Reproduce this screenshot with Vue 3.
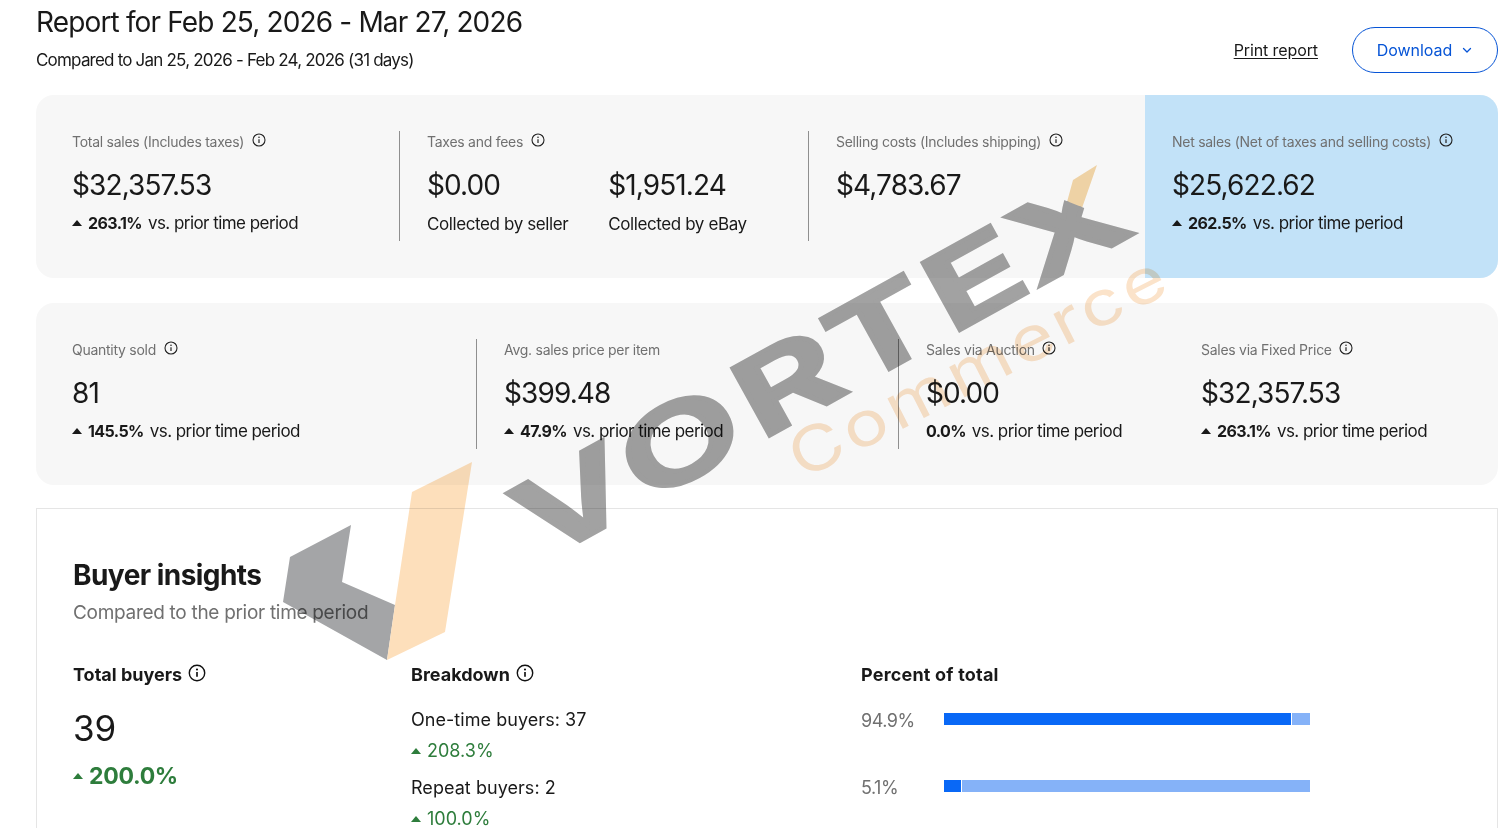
<script setup>
const row1 = [
  { label: 'Total sales (Includes taxes)', info: true, values: [{ v: '$32,357.53' }], pct: '263.1%', up: true },
  { label: 'Taxes and fees', info: true, values: [{ v: '$0.00', note: 'Collected by seller' }, { v: '$1,951.24', note: 'Collected by eBay' }] },
  { label: 'Selling costs (Includes shipping)', info: true, values: [{ v: '$4,783.67' }] },
  { label: 'Net sales (Net of taxes and selling costs)', info: true, values: [{ v: '$25,622.62' }], pct: '262.5%', up: true, net: true }
]
const row2 = [
  { label: 'Quantity sold', info: true, values: [{ v: '81' }], pct: '145.5%', up: true },
  { label: 'Avg. sales price per item', values: [{ v: '$399.48' }], pct: '47.9%', up: true },
  { label: 'Sales via Auction', info: true, values: [{ v: '$0.00' }], pct: '0.0%' },
  { label: 'Sales via Fixed Price', info: true, values: [{ v: '$32,357.53' }], pct: '263.1%', up: true }
]
const bars = [
  { label: '94.9%', dark: 347, y: 'first' },
  { label: '5.1%', dark: 17, y: 'second' }
]
</script>

<template>
  <div class="page">
    <header class="head">
      <div>
        <h1>Report for Feb 25, 2026 - Mar 27, 2026</h1>
        <p class="compare">Compared to Jan 25, 2026 - Feb 24, 2026 (31 days)</p>
      </div>
      <div class="actions">
        <a class="print">Print report</a>
        <button class="download">
          Download
          <svg width="12" height="12" viewBox="0 0 12 12" fill="none"><path d="M2.5 4.5 6 8l3.5-3.5" stroke="#0654d6" stroke-width="1.3" stroke-linecap="round" stroke-linejoin="round"/></svg>
        </button>
      </div>
    </header>

    <section class="card row1">
      <div v-for="c in row1" :key="c.label" class="cell" :class="{ net: c.net }">
        <div class="inner">
          <div class="label">{{ c.label }}
            <svg v-if="c.info" class="info" viewBox="0 0 14 14" fill="none"><circle cx="7" cy="7" r="6" stroke="#222" stroke-width="1.1"/><path d="M7 6.3v3.6" stroke="#222" stroke-width="1.2"/><circle cx="7" cy="4.3" r=".8" fill="#222"/></svg>
          </div>
          <div class="values">
            <div v-for="v in c.values" :key="v.v" class="valcol">
              <div class="value">{{ v.v }}</div>
              <div v-if="v.note" class="note">{{ v.note }}</div>
            </div>
          </div>
          <div v-if="c.pct" class="delta"><i v-if="c.up" class="tri"></i><b>{{ c.pct }}</b><span>vs. prior time period</span></div>
        </div>
      </div>
    </section>

    <section class="card row2">
      <div v-for="c in row2" :key="c.label" class="cell">
        <div class="inner">
          <div class="label">{{ c.label }}
            <svg v-if="c.info" class="info" viewBox="0 0 14 14" fill="none"><circle cx="7" cy="7" r="6" stroke="#222" stroke-width="1.1"/><path d="M7 6.3v3.6" stroke="#222" stroke-width="1.2"/><circle cx="7" cy="4.3" r=".8" fill="#222"/></svg>
          </div>
          <div class="values">
            <div v-for="v in c.values" :key="v.v" class="valcol"><div class="value">{{ v.v }}</div></div>
          </div>
          <div class="delta"><i v-if="c.up" class="tri"></i><b>{{ c.pct }}</b><span>vs. prior time period</span></div>
        </div>
      </div>
    </section>

    <section class="insights">
      <h2>Buyer insights</h2>
      <p class="sub">Compared to the prior time period</p>
      <div class="cols">
        <div class="col-a">
          <h3>Total buyers <svg class="info big" viewBox="0 0 14 14" fill="none"><circle cx="7" cy="7" r="6" stroke="#111" stroke-width="1.1"/><path d="M7 6.3v3.6" stroke="#111" stroke-width="1.3"/><circle cx="7" cy="4.3" r=".85" fill="#111"/></svg></h3>
          <div class="big-num">39</div>
          <div class="big-pct"><i class="tri green"></i>200.0%</div>
        </div>
        <div class="col-b">
          <h3>Breakdown <svg class="info big" viewBox="0 0 14 14" fill="none"><circle cx="7" cy="7" r="6" stroke="#111" stroke-width="1.1"/><path d="M7 6.3v3.6" stroke="#111" stroke-width="1.3"/><circle cx="7" cy="4.3" r=".85" fill="#111"/></svg></h3>
          <div class="bd first">One-time buyers: 37</div>
          <div class="bd-pct"><i class="tri green"></i>208.3%</div>
          <div class="bd">Repeat buyers: 2</div>
          <div class="bd-pct"><i class="tri green"></i>100.0%</div>
        </div>
        <div class="col-c">
          <h3>Percent of total</h3>
          <div v-for="b in bars" :key="b.label" class="bar-row" :class="b.y">
            <span class="pct">{{ b.label }}</span>
            <div class="bar">
              <div class="dark" :style="{ width: b.dark + 'px' }"></div>
              <div class="light"></div>
            </div>
          </div>
        </div>
      </div>
    </section>

    <svg class="watermark" width="1512" height="828" viewBox="0 0 1512 828">
      <defs>
        <clipPath id="wm-x-clip"><polygon points="360,-100 396,-100 444,-12 456,10 360,10"/></clipPath>
      </defs>
      <polygon points="290,557 351,525 342,582 395,605 387,660 283,602" fill="#a4a5a7"/>
      <polygon points="412,492 472,462 445,632 387,660 395,605" fill="#fddfbb"/>
      <polygon points="1097,165 1073,180 1067,202 1082,208" fill="#f6d9ab"/>
      <text class="wm-v" x="-6 73 161 232 306" transform="translate(549,558) rotate(-29) scale(1.5,1)">VORTE</text>
      <text class="wm-v" x="372" transform="translate(549,558) rotate(-29) scale(1.5,1)" clip-path="url(#wm-x-clip)">X</text>
      <text class="wm-c" transform="translate(802,480) rotate(-27) scale(1.2,1)">Commerce</text>
    </svg>
  </div>
</template>

<style scoped>
.page {
  position: relative;
  width: 1512px;
  height: 828px;
  overflow: hidden;
  box-sizing: border-box;
  padding: 0 14px 0 36px;
  background: #fff;
  color: #191919;
  font-family: Inter, "Liberation Sans", sans-serif;
}
.head {
  display: flex;
  justify-content: space-between;
  height: 95px;
}
h1 {
  margin: 5px 0 0;
  font-size: 28px;
  line-height: 34px;
  font-weight: 400;
  letter-spacing: -0.85px;
}
.compare {
  margin: 9px 0 0;
  font-size: 17px;
  line-height: 24px;
  letter-spacing: -0.8px;
}
.actions {
  display: flex;
  align-items: center;
  gap: 34px;
  height: 46px;
  margin-top: 27px;
}
.print {
  font-size: 16px;
  letter-spacing: -0.1px;
  text-decoration: underline;
  text-underline-offset: 2px;
}
.download {
  width: 146px;
  height: 46px;
  box-sizing: border-box;
  border: 1px solid #0654d6;
  border-radius: 23px;
  background: #fff;
  color: #0654d6;
  font: 400 16px Inter, "Liberation Sans", sans-serif;
  letter-spacing: -0.05px;
  display: flex;
  align-items: center;
  justify-content: center;
  gap: 9px;
}
.card {
  display: grid;
  background: #f7f7f7;
  border-radius: 18px;
  overflow: hidden;
  height: 183px;
}
.row1 { grid-template-columns: 363px 409px 337px 353px; }
.row2 {
  grid-template-columns: 440px 422px 275px 325px;
  margin-top: 25px;
  height: 182px;
}
.cell { padding: 36px 0 0; }
.cell .inner { height: 110px; padding-left: 27px; box-sizing: border-box; }
.cell:first-child .inner { padding-left: 36px; }
.cell + .cell .inner { border-left: 1px solid #8f8f8f; }
.row1 .cell.net { background: #c2e2f8; }
.row1 .cell.net .inner { border-left: 0; padding-left: 27px; }
.row2 .cell:last-child .inner { border-left: 0; padding-left: 28px; }
.label {
  font-size: 14px;
  line-height: 20px;
  height: 20px;
  color: #707070;
  letter-spacing: -0.27px;
  padding-top: 1px;
  white-space: nowrap;
}
.info {
  width: 14px;
  height: 14px;
  margin-left: 4px;
  vertical-align: 0;
}
.info.big { width: 18px; height: 18px; margin-left: 2px; vertical-align: -1px; }
.values { display: flex; gap: 40px; margin-top: 15px; }
.value {
  font-size: 28px;
  line-height: 36px;
  letter-spacing: -0.9px;
}
.note {
  font-size: 17px;
  line-height: 24px;
  margin-top: 9px;
  letter-spacing: -0.4px;
}
.delta {
  display: flex;
  align-items: center;
  margin-top: 8px;
  font-size: 17px;
  line-height: 24px;
  letter-spacing: -0.55px;
}
.delta b { font-weight: 700; font-size: 16px; letter-spacing: -0.6px; margin-right: 6px; }
.tri {
  width: 0;
  height: 0;
  margin-right: 6px;
  border-left: 5px solid transparent;
  border-right: 5px solid transparent;
  border-bottom: 6px solid #191919;
  display: inline-block;
}
.tri.green { border-bottom-color: #2e7d3c; }
.insights {
  margin-top: 23px;
  height: 360px;
  box-sizing: border-box;
  border: 1px solid #e5e5e5;
  padding: 49px 36px 0;
}
h2 {
  margin: 0;
  font-size: 28px;
  line-height: 34px;
  font-weight: 700;
  letter-spacing: -0.55px;
}
.sub {
  margin: 9px 0 0;
  font-size: 19px;
  line-height: 24px;
  color: #707070;
  letter-spacing: -0.3px;
}
.cols { display: grid; grid-template-columns: 338px 450px 1fr; margin-top: 38px; }
h3 {
  margin: 0;
  font-size: 18px;
  line-height: 24px;
  font-weight: 700;
  letter-spacing: 0;
}
.col-c h3 { letter-spacing: 0.2px; }
.big-num { font-size: 35px; line-height: 44px; margin-top: 19px; }
.big-pct {
  display: flex;
  align-items: center;
  font-size: 23px;
  line-height: 30px;
  font-weight: 700;
  color: #2e7d3c;
  margin-top: 11px;
  letter-spacing: -0.3px;
}
.big-pct .tri { margin-right: 6px; }
.bd { font-size: 18px; line-height: 24px; margin-top: 7px; letter-spacing: 0.05px; }
.bd.first { margin-top: 21px; }
.bd-pct {
  display: flex;
  align-items: center;
  font-size: 18px;
  line-height: 24px;
  margin-top: 7px;
  color: #2e7d3c;
  margin-bottom: 13px;
}
.bd-pct .tri { margin-right: 6px; }
.bar-row { display: flex; align-items: center; height: 24px; }
.bar-row.first { margin-top: 21px; }
.bar-row.second { margin-top: 43px; }
.pct { width: 83px; font-size: 18px; color: #707070; letter-spacing: -0.5px; }
.bar { display: flex; gap: 1px; width: 366px; height: 12px; margin-top: -3px; }
.dark { background: #0968f6; }
.light { flex: 1; background: #85b2f8; }
.watermark {
  position: absolute;
  left: 0;
  top: 0;
  pointer-events: none;
  mix-blend-mode: multiply;
}
.wm-v {
  font-family: Inter, "Liberation Sans", sans-serif;
  font-weight: 600;
  font-size: 106px;
  fill: #a2a2a2;
  stroke: #a2a2a2;
  stroke-width: 4px;
}
.wm-c {
  font-family: Inter, sans-serif;
  font-weight: 400;
  font-size: 62px;
  letter-spacing: 3.5px;
  fill: #fbe3ca;
}
</style>
